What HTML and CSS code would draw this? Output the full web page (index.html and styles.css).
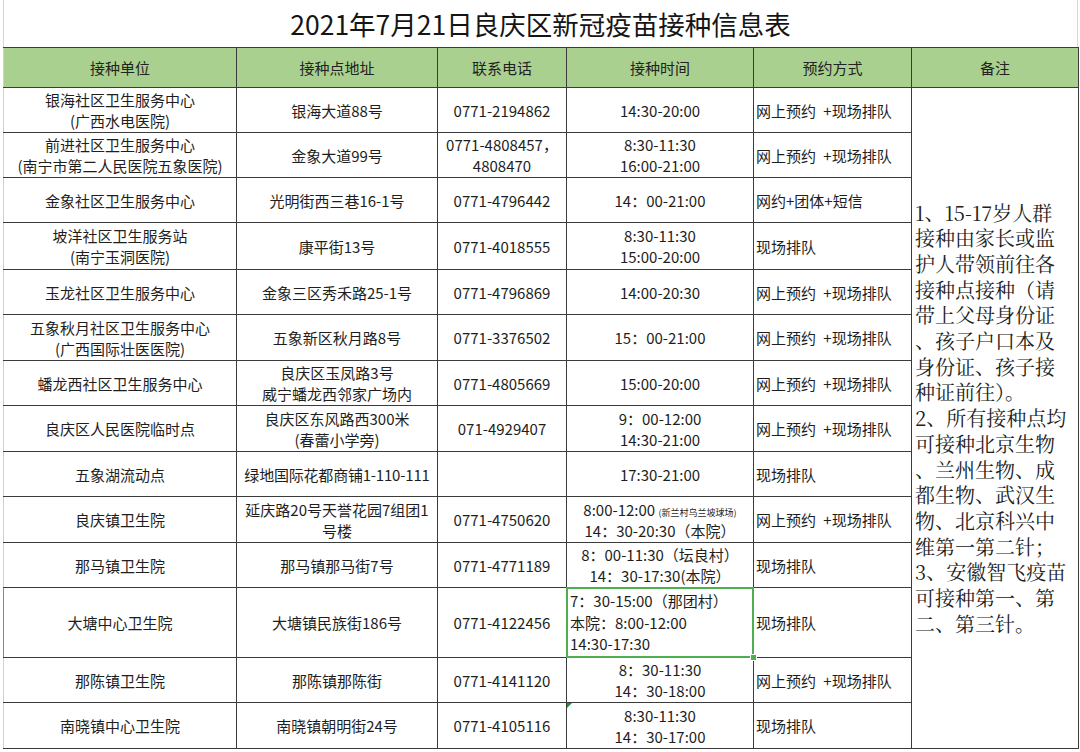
FILE: index.html
```html
<!DOCTYPE html>
<html lang="zh-CN">
<head>
<meta charset="utf-8">
<title>2021年7月21日良庆区新冠疫苗接种信息表</title>
<link rel="stylesheet" href="styles.css">
</head>
<body>
<div class="sheet">
  <div class="title">2021年7月21日良庆区新冠疫苗接种信息表</div>
  <table class="grid">
    <colgroup>
      <col class="c1"><col class="c2"><col class="c3"><col class="c4"><col class="c5"><col class="c6">
    </colgroup>
    <thead>
      <tr class="hdr">
        <th class="first">接种单位</th>
        <th>接种点地址</th>
        <th>联系电话</th>
        <th>接种时间</th>
        <th>预约方式</th>
        <th>备注</th>
      </tr>
    </thead>
    <tbody>
      <tr class="r45">
        <td class="first">银海社区卫生服务中心<br>(广西水电医院)</td>
        <td>银海大道88号</td>
        <td>0771-2194862</td>
        <td>14:30-20:00</td>
        <td class="way">网上预约 +现场排队</td>
        <td class="notes" rowspan="14">1、15-17岁人群<br>接种由家长或监<br>护人带领前往各<br>接种点接种（请<br>带上父母身份证<br>、孩子户口本及<br>身份证、孩子接<br>种证前往）。<br>2、所有接种点均<br>可接种北京生物<br>、兰州生物、成<br>都生物、武汉生<br>物、北京科兴中<br>维第一第二针；<br>3、安徽智飞疫苗<br>可接种第一、第<br>二、第三针。</td>
      </tr>
      <tr class="r45">
        <td class="first">前进社区卫生服务中心<br>(南宁市第二人民医院五象医院)</td>
        <td>金象大道99号</td>
        <td>0771-4808457，<br>4808470</td>
        <td>8:30-11:30<br>16:00-21:00</td>
        <td class="way">网上预约 +现场排队</td>
      </tr>
      <tr class="r45">
        <td class="first">金象社区卫生服务中心</td>
        <td>光明街西三巷16-1号</td>
        <td>0771-4796442</td>
        <td>14：00-21:00</td>
        <td class="way">网约+团体+短信</td>
      </tr>
      <tr class="r47">
        <td class="first">坡洋社区卫生服务站<br>(南宁玉洞医院)</td>
        <td>康平街13号</td>
        <td>0771-4018555</td>
        <td>8:30-11:30<br>15:00-20:00</td>
        <td class="way">现场排队</td>
      </tr>
      <tr class="r45">
        <td class="first">玉龙社区卫生服务中心</td>
        <td>金象三区秀禾路25-1号</td>
        <td>0771-4796869</td>
        <td>14:00-20:30</td>
        <td class="way">网上预约 +现场排队</td>
      </tr>
      <tr class="r46">
        <td class="first">五象秋月社区卫生服务中心<br>(广西国际壮医医院)</td>
        <td>五象新区秋月路8号</td>
        <td>0771-3376502</td>
        <td>15：00-21:00</td>
        <td class="way">网上预约 +现场排队</td>
      </tr>
      <tr class="r45">
        <td class="first">蟠龙西社区卫生服务中心</td>
        <td>良庆区玉凤路3号<br>威宁蟠龙西邻家广场内</td>
        <td>0771-4805669</td>
        <td>15:00-20:00</td>
        <td class="way">网上预约 +现场排队</td>
      </tr>
      <tr class="r46">
        <td class="first">良庆区人民医院临时点</td>
        <td>良庆区东风路西300米<br>(春蕾小学旁)</td>
        <td>071-4929407</td>
        <td>9：00-12:00<br>14:30-21:00</td>
        <td class="way">网上预约 +现场排队</td>
      </tr>
      <tr class="r45">
        <td class="first">五象湖流动点</td>
        <td class="tight">绿地国际花都商铺1-110-111</td>
        <td></td>
        <td>17:30-21:00</td>
        <td class="way">现场排队</td>
      </tr>
      <tr class="r46">
        <td class="first">良庆镇卫生院</td>
        <td>延庆路20号天誉花园7组团1<br>号楼</td>
        <td>0771-4750620</td>
        <td>8:00-12:00 <span class="tiny">(新兰村乌兰坡球场)</span><br>14：30-20:30（本院）</td>
        <td class="way">网上预约 +现场排队</td>
      </tr>
      <tr class="r45">
        <td class="first">那马镇卫生院</td>
        <td>那马镇那马街7号</td>
        <td>0771-4771189</td>
        <td>8：00-11:30（坛良村）<br>14：30-17:30(本院）</td>
        <td class="way">现场排队</td>
      </tr>
      <tr class="r70">
        <td class="first active-row">大塘中心卫生院</td>
        <td>大塘镇民族街186号</td>
        <td>0771-4122456</td>
        <td class="sel">7：30-15:00（那团村）<br>本院：8:00-12:00<br>14:30-17:30</td>
        <td class="way">现场排队</td>
      </tr>
      <tr class="r45">
        <td class="first">那陈镇卫生院</td>
        <td>那陈镇那陈街</td>
        <td>0771-4141120</td>
        <td>8：30-11:30<br>14：30-18:00</td>
        <td class="way">网上预约 +现场排队</td>
      </tr>
      <tr class="r46">
        <td class="first">南晓镇中心卫生院</td>
        <td>南晓镇朝明街24号</td>
        <td>0771-4105116</td>
        <td class="flag">8:30-11:30<br>14：30-17:00</td>
        <td class="way">现场排队</td>
      </tr>
    </tbody>
  </table>
</div>
</body>
</html>
```
FILE: styles.css
```css
html, body {
  margin: 0;
  padding: 0;
  background: #ffffff;
}

body {
  font-family: "Noto Sans CJK SC", "Noto Sans", sans-serif;
  color: #1e1e1e;
}

.sheet {
  padding-left: 3px;
  width: 1075px;
}

.title {
  box-sizing: border-box;
  width: 1075px;
  height: 47px;
  display: flex;
  align-items: center;
  justify-content: center;
  font-size: 26.5px;
  color: #151515;
  border-left: 1px solid #d6d6d6;
  border-right: 1px solid #d6d6d6;
}

.grid {
  border-collapse: collapse;
  table-layout: fixed;
  width: 1075px;
}

.c1 { width: 233px; }
.c2 { width: 201px; }
.c3 { width: 129px; }
.c4 { width: 187px; }
.c5 { width: 158px; }
.c6 { width: 167px; }

.grid th,
.grid td {
  border: 1px solid #3b3b3b;
  padding: 0 1px;
  font-size: 15px;
  line-height: 21px;
  font-weight: normal;
  text-align: center;
  vertical-align: middle;
  white-space: nowrap;
  overflow: hidden;
}

.grid th {
  background: #a9d08e;
  color: #222;
}

.grid .first {
  border-left: 1px solid #d2d2d2;
}

.grid .first.active-row {
  border-left: 1px solid #4caf50;
}

.hdr { height: 40px; }
.r45 { height: 45px; }
.r46 { height: 46px; }
.r47 { height: 47px; }
.r70 { height: 70px; }

.grid td.way {
  text-align: left;
  padding-left: 2px;
  word-spacing: 4px;
}

.grid td.tight {
  padding: 0;
  letter-spacing: -0.2px;
}

.tiny {
  font-size: 9px;
  line-height: 9px;
}

.grid td.notes {
  text-align: left;
  padding-left: 3px;
  font-family: "Noto Serif CJK SC", "Noto Sans CJK SC", serif;
  font-size: 20px;
  line-height: 25.7px;
  color: #202020;
  overflow: visible;
}

.grid td.sel {
  position: relative;
  text-align: left;
  padding-left: 3px;
  line-height: 21.5px;
  overflow: visible;
}

.grid td.sel::after {
  content: "";
  position: absolute;
  left: -1px;
  top: -1px;
  right: -1px;
  bottom: -1px;
  border: 2px solid #4caf50;
  pointer-events: none;
}

.grid td.sel::before {
  content: "";
  position: absolute;
  right: -4px;
  bottom: -4px;
  width: 5px;
  height: 5px;
  background: #4caf50;
  border: 1px solid #ffffff;
  z-index: 2;
}

.grid td.flag {
  position: relative;
  overflow: visible;
}

.grid td.flag::before {
  content: "";
  position: absolute;
  left: 0;
  top: 0;
  width: 0;
  height: 0;
  border-top: 5px solid #1f8f3a;
  border-right: 5px solid transparent;
}
```
